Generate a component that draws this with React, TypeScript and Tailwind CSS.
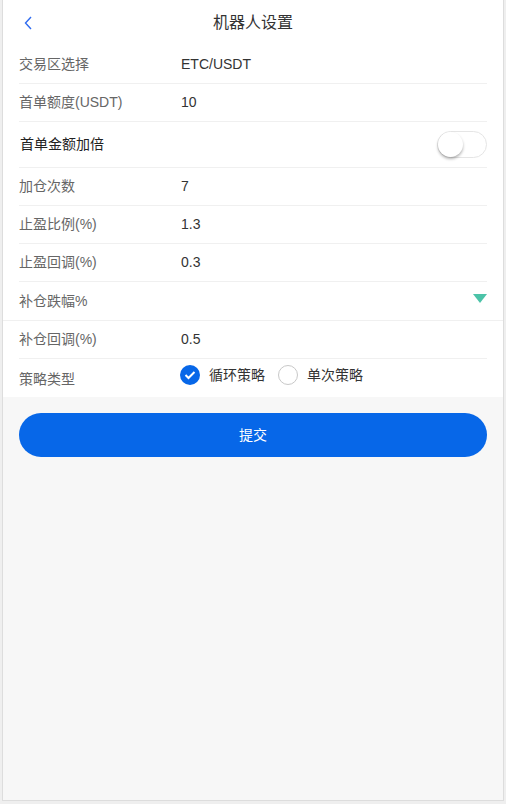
import React, { useState } from "react"

const font = "font-['Liberation_Sans','Noto_Sans_CJK_SC',sans-serif]"

type Field = { label: string; value: string }

const topFields: Field[] = [
  { label: "交易区选择", value: "ETC/USDT" },
  { label: "首单额度(USDT)", value: "10" },
]

const midFields: Field[] = [
  { label: "加仓次数", value: "7" },
  { label: "止盈比例(%)", value: "1.3" },
  { label: "止盈回调(%)", value: "0.3" },
]

function Row({ label, value }: Field) {
  return (
    <div className="mx-4 flex h-[38px] items-center border-b border-[#f0f0f0]">
      <span className="w-[162px] text-[14px] text-[#666]">{label}</span>
      <span className="text-[14px] text-[#333]">{value}</span>
    </div>
  )
}

function Check({ on }: { on: boolean }) {
  return on ? (
    <span className="flex h-[20px] w-[20px] items-center justify-center rounded-full bg-[#0767e8]">
      <svg width="12" height="10" viewBox="0 0 12 10" fill="none">
        <path d="M1.5 5L4.5 8L10.5 2" stroke="white" strokeWidth="2" />
      </svg>
    </span>
  ) : (
    <span className="h-[20px] w-[20px] rounded-full border border-[#c8c8c8]" />
  )
}

export default function App() {
  const [double, setDouble] = useState(false)
  const [strategy, setStrategy] = useState("loop")

  return (
    <div className={`min-h-[804px] bg-[#efefef] ${font}`}>
      <div className="ml-[2px] flex h-[801px] w-[502px] flex-col border-x border-b border-[#dddddd] bg-[#f7f7f7]">
        <div className="bg-white">
          {/* Header */}
          <div className="relative flex h-[46px] items-center justify-center">
            <button className="absolute left-[18px] top-[14px] text-[#2f6bf0]">
              <svg width="16" height="18" viewBox="0 0 16 18" fill="none">
                <path d="M10 3L4.5 9L10 15" stroke="currentColor" strokeWidth="1.4" />
              </svg>
            </button>
            <h1 className="text-[16px] text-[#333]">机器人设置</h1>
          </div>

          {topFields.map((f) => (
            <Row key={f.label} {...f} />
          ))}

          {/* Toggle row */}
          <div className="mx-4 flex h-[46px] items-center justify-between border-b border-[#f0f0f0]">
            <span className="pl-px text-[14px] text-[#222]">首单金额加倍</span>
            <button
              onClick={() => setDouble(!double)}
              className={`relative h-[27px] w-[50px] rounded-full border border-[#e5e5e5] ${double ? "bg-[#0767e8]" : "bg-white"}`}
            >
              <span
                className={`absolute top-0 h-[25px] w-[25px] rounded-full bg-white shadow-[0_2px_3px_rgba(0,0,0,0.3)] ${double ? "left-[23px]" : "left-0"}`}
              />
            </button>
          </div>

          {midFields.map((f) => (
            <Row key={f.label} {...f} />
          ))}

          {/* Select row */}
          <div className="flex h-[39px] items-center justify-between border-b border-[#f0f0f0] px-4">
            <span className="text-[14px] text-[#666]">补仓跌幅%</span>
            <svg width="14" height="9" viewBox="0 0 14 9" className="mb-[5px]">
              <path d="M0 0H14L7 9Z" fill="#4cc3a8" />
            </svg>
          </div>

          <Row label="补仓回调(%)" value="0.5" />

          {/* Strategy type */}
          <div className="mx-4 flex h-[38px] items-center">
            <span className="mt-[3px] w-[161px] text-[14px] text-[#666]">策略类型</span>
            <div className="mb-[6px] flex items-center">
              <button onClick={() => setStrategy("loop")} className="flex items-center">
                <Check on={strategy === "loop"} />
                <span className="ml-[9px] text-[14px] text-[#333]">循环策略</span>
              </button>
              <button onClick={() => setStrategy("once")} className="ml-[13px] flex items-center">
                <Check on={strategy === "once"} />
                <span className="ml-[9px] text-[14px] text-[#333]">单次策略</span>
              </button>
            </div>
          </div>
        </div>

        {/* Submit */}
        <div className="px-4 pt-[16px]">
          <button className="h-[44px] w-full rounded-full bg-[#0767e8] text-[14px] text-white">提交</button>
        </div>
      </div>
    </div>
  )
}
